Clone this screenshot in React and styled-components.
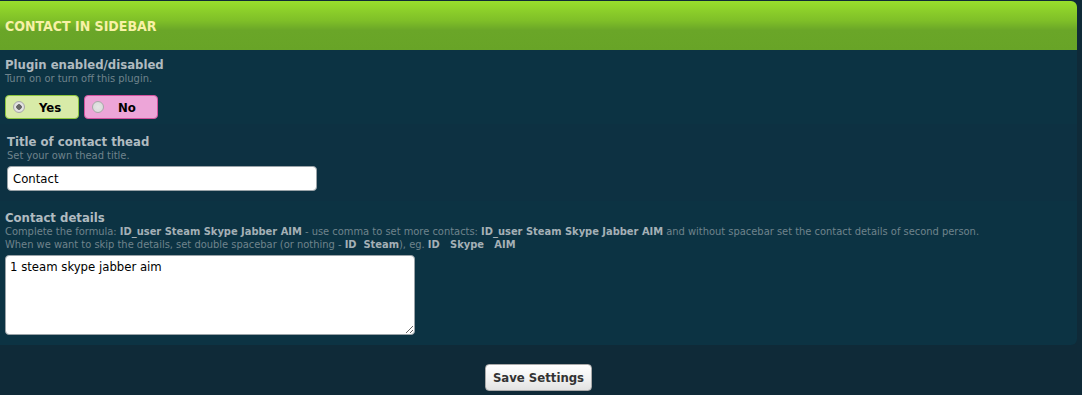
import React from 'react';
import styled, { createGlobalStyle } from 'styled-components';

const GlobalStyle = createGlobalStyle`
    html, body {
        margin: 0;
        padding: 0;
        background: #0f2a38;
    }
    body {
        font-family: "DejaVu Sans Condensed", "DejaVu Sans", sans-serif;
        width: 1082px;
        height: 395px;
        overflow: hidden;
    }
`;

const Page = styled.div`
    padding-top: 1px;
    padding-right: 5px;
`;

const Panel = styled.section`
    background: #0c3343;
    border-radius: 0 6px 6px 0;
`;

const Header = styled.header`
    height: 49px;
    display: flex;
    align-items: center;
    padding: 0 5px;
    border-radius: 0 6px 0 0;
    background-image: linear-gradient(to bottom, #98de2c 0%, #7fbf28 40%, #6aa628 60%, #68a427 100%);

    h2 {
        margin: 0;
        font-size: 14px;
        font-weight: bold;
        color: #f8f1a6;
        text-transform: uppercase;
    }
`;

const Row = styled.div`
    padding: ${({ $pad }) => $pad};
    background: ${({ $shade }) => $shade || 'transparent'};
    border-radius: ${({ $last }) => ($last ? '0 0 6px 0' : '0')};
`;

const Label = styled.div`
    font-size: 13px;
    font-weight: bold;
    color: #b0bbc0;
    line-height: 15px;
`;

const Desc = styled.div`
    font-size: 11px;
    color: #6f838c;
    line-height: 13px;

    b {
        color: #a4b0b6;
    }
`;

const Choices = styled.div`
    display: flex;
    gap: 5px;
    margin-top: 10px;
`;

const Choice = styled.label`
    display: flex;
    align-items: center;
    width: 74px;
    height: 24px;
    box-sizing: border-box;
    padding-left: 7px;
    border-radius: 4px;
    border: 1px solid ${({ $on }) => ($on ? '#8cc63e' : '#d3539f')};
    background: ${({ $on }) => ($on ? '#d8eba8' : '#eda5d8')};
    font-size: 13px;
    font-weight: bold;
    color: #000;
    cursor: pointer;
`;

const Dot = styled.span`
    width: 12px;
    height: 12px;
    box-sizing: border-box;
    border-radius: 50%;
    border: 1px solid #a8a8a8;
    background: radial-gradient(circle, ${({ $on }) => ($on ? '#666 0, #666 2.5px, #e6e6e6 3px' : '#e6e6e6 0')}, #d6d6d6 100%);
    margin-right: 14px;
`;

const TextInput = styled.input`
    display: block;
    margin-top: 4px;
    width: 310px;
    height: 25px;
    box-sizing: border-box;
    border: 1px solid #9aa3a8;
    border-radius: 4px;
    padding: 0 5px;
    font-family: inherit;
    font-size: 13px;
    color: #000;
    outline: none;
`;

const TextArea = styled.textarea`
    display: block;
    margin-top: 4px;
    width: 410px;
    height: 80px;
    box-sizing: border-box;
    border: 1px solid #9aa3a8;
    border-radius: 4px;
    padding: 3px 4px;
    font-family: inherit;
    font-size: 13px;
    color: #000;
    outline: none;
`;

const Footer = styled.div`
    display: flex;
    justify-content: center;
    padding-top: 19px;
`;

const SaveButton = styled.button`
    height: 27px;
    padding: 0 7px;
    border: 1px solid #a9a9a9;
    border-radius: 4px;
    background: linear-gradient(to bottom, #ffffff 0%, #f3f3f3 50%, #e2e2e2 100%);
    font-family: inherit;
    font-size: 13px;
    font-weight: bold;
    color: #333;
    cursor: pointer;
`;

const App = () => (
    <Page>
        <GlobalStyle />
        <Panel>
            <Header>
                <h2>Contact in sidebar</h2>
            </Header>
            <Row $pad="7px 5px 5px">
                <Label>Plugin enabled/disabled</Label>
                <Desc>Turn on or turn off this plugin.</Desc>
                <Choices>
                    <Choice $on>
                        <Dot $on />
                        Yes
                    </Choice>
                    <Choice>
                        <Dot />
                        No
                    </Choice>
                </Choices>
            </Row>
            <Row $pad="10px 7px 10px" $shade="#0d3142">
                <Label>Title of contact thead</Label>
                <Desc>Set your own thead title.</Desc>
                <TextInput defaultValue="Contact" />
            </Row>
            <Row $pad="9px 5px 10px" $last>
                <Label>Contact details</Label>
                <Desc>
                    Complete the formula: <b>ID_user Steam Skype Jabber AIM</b> - use comma to set more
                    contacts: <b>ID_user Steam Skype Jabber AIM</b> and without spacebar set the contact
                    details of second person.
                    <br />
                    When we want to skip the details, set double spacebar (or nothing - <b>ID&nbsp; Steam</b>),
                    eg. <b>ID &nbsp; Skype &nbsp; AIM</b>
                </Desc>
                <TextArea defaultValue="1 steam skype jabber aim" />
            </Row>
        </Panel>
        <Footer>
            <SaveButton>Save Settings</SaveButton>
        </Footer>
    </Page>
);

export default App;
